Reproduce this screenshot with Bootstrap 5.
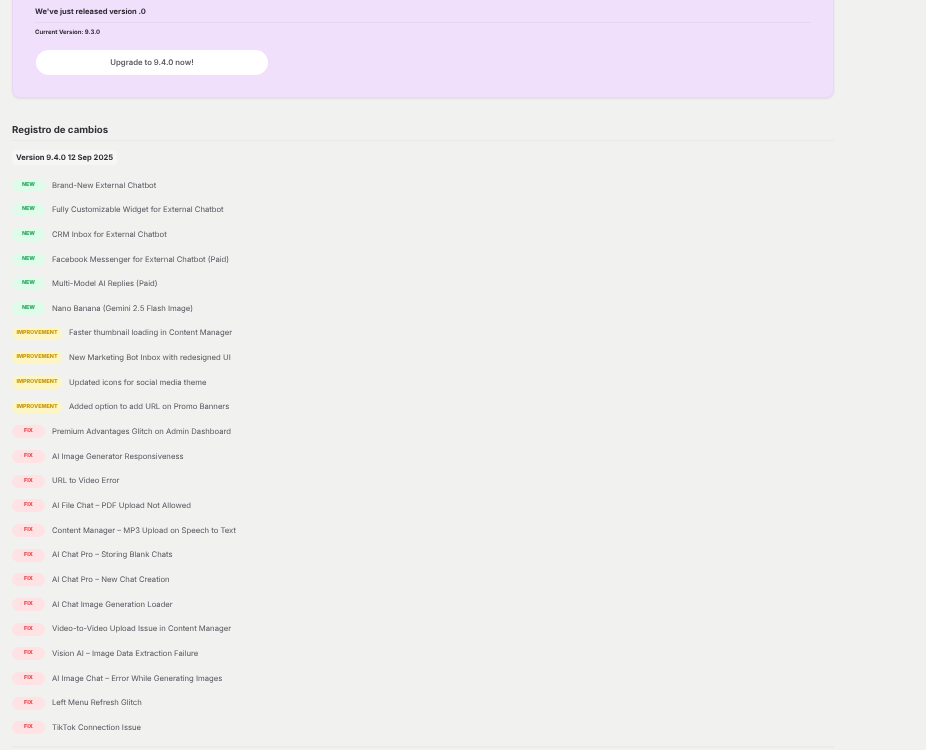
<!DOCTYPE html>
<html lang="en">
<head>
<meta charset="utf-8">
<title>Registro de cambios</title>
<link href="https://cdn.jsdelivr.net/npm/bootstrap@5.3.0/dist/css/bootstrap.min.css" rel="stylesheet">
<style>
html,body{height:750px;overflow:hidden}
body{background:#f1f1ef;font-family:Inter,"Liberation Sans",sans-serif;color:#454550;margin:0;text-rendering:geometricPrecision}
.sheet{width:822px;margin-left:12px;filter:blur(.5px)}
.promo{background:#f1e0fb;border:1px solid #e9d8f3;border-radius:8px;margin-top:-20px;height:118px;padding:24px 22px 0 22px;box-shadow:0 1px 2px rgba(120,80,150,.12)}
.promo-title{font-size:7.55px;font-weight:700;color:#2f2d36;line-height:14px}
.promo-rule{border-top:1px solid #e8d6f2;margin:3px 0 0 0;opacity:1}
.promo-cur{font-size:6px;font-weight:700;color:#2f2d36;line-height:10px;margin-top:5px}
.promo-btn{display:block;width:232px;height:25px;border-radius:13px;background:#fff;border:0;margin:12px 0 0 1px;padding:0;color:#5b5a66;font-size:7.75px;font-weight:600;line-height:25px;text-align:center}
.log-title{font-size:9.7px;font-weight:700;color:#2f2f36;line-height:14px;margin:26px 0 0}
.log-rule{border-top:1px solid #e9e9e7;margin:2px 0 0;opacity:1}
.ver{display:inline-block;background:#f6f6f5;border-radius:4px;font-size:7.6px;font-weight:700;color:#2f2f36;line-height:15px;padding:0 4px;margin-top:9px}
.rows{margin-top:7px;height:573px}
.entry{height:24.66px;gap:7px;font-size:7.7px;font-weight:400;color:#55555f}
.tag{width:33px;height:13px;border-radius:7px;font-size:5.4px;font-weight:800;line-height:13px;text-align:center;flex:none}
.tag-new{background:#dffbe9;color:#2ea863}
.tag-imp{width:50px;background:#fdf6c3;color:#c8980f}
.tag-fix{background:#ffe2e4;color:#e5484d}
.end-rule{border-top:2px solid #ebebe9;margin:0;opacity:1}
</style>
</head>
<body>
<div class="sheet">
  <section class="promo">
    <div class="promo-title">We've just released version .0</div>
    <hr class="promo-rule">
    <div class="promo-cur">Current Version: 9.3.0</div>
    <a class="promo-btn text-decoration-none" href="#">Upgrade to 9.4.0 now!</a>
  </section>
  <h2 class="log-title">Registro de cambios</h2>
  <hr class="log-rule">
  <div class="ver">Version 9.4.0 12 Sep 2025</div>
  <div class="rows">
    <div class="entry d-flex align-items-center"><span class="tag tag-new">NEW</span><span>Brand-New External Chatbot</span></div>
    <div class="entry d-flex align-items-center"><span class="tag tag-new">NEW</span><span>Fully Customizable Widget for External Chatbot</span></div>
    <div class="entry d-flex align-items-center"><span class="tag tag-new">NEW</span><span>CRM Inbox for External Chatbot</span></div>
    <div class="entry d-flex align-items-center"><span class="tag tag-new">NEW</span><span>Facebook Messenger for External Chatbot (Paid)</span></div>
    <div class="entry d-flex align-items-center"><span class="tag tag-new">NEW</span><span>Multi-Model AI Replies (Paid)</span></div>
    <div class="entry d-flex align-items-center"><span class="tag tag-new">NEW</span><span>Nano Banana (Gemini 2.5 Flash Image)</span></div>
    <div class="entry d-flex align-items-center"><span class="tag tag-imp">IMPROVEMENT</span><span>Faster thumbnail loading in Content Manager</span></div>
    <div class="entry d-flex align-items-center"><span class="tag tag-imp">IMPROVEMENT</span><span>New Marketing Bot Inbox with redesigned UI</span></div>
    <div class="entry d-flex align-items-center"><span class="tag tag-imp">IMPROVEMENT</span><span>Updated icons for social media theme</span></div>
    <div class="entry d-flex align-items-center"><span class="tag tag-imp">IMPROVEMENT</span><span>Added option to add URL on Promo Banners</span></div>
    <div class="entry d-flex align-items-center"><span class="tag tag-fix">FIX</span><span>Premium Advantages Glitch on Admin Dashboard</span></div>
    <div class="entry d-flex align-items-center"><span class="tag tag-fix">FIX</span><span>AI Image Generator Responsiveness</span></div>
    <div class="entry d-flex align-items-center"><span class="tag tag-fix">FIX</span><span>URL to Video Error</span></div>
    <div class="entry d-flex align-items-center"><span class="tag tag-fix">FIX</span><span>AI File Chat – PDF Upload Not Allowed</span></div>
    <div class="entry d-flex align-items-center"><span class="tag tag-fix">FIX</span><span>Content Manager – MP3 Upload on Speech to Text</span></div>
    <div class="entry d-flex align-items-center"><span class="tag tag-fix">FIX</span><span>AI Chat Pro – Storing Blank Chats</span></div>
    <div class="entry d-flex align-items-center"><span class="tag tag-fix">FIX</span><span>AI Chat Pro – New Chat Creation</span></div>
    <div class="entry d-flex align-items-center"><span class="tag tag-fix">FIX</span><span>AI Chat Image Generation Loader</span></div>
    <div class="entry d-flex align-items-center"><span class="tag tag-fix">FIX</span><span>Video-to-Video Upload Issue in Content Manager</span></div>
    <div class="entry d-flex align-items-center"><span class="tag tag-fix">FIX</span><span>Vision AI – Image Data Extraction Failure</span></div>
    <div class="entry d-flex align-items-center"><span class="tag tag-fix">FIX</span><span>AI Image Chat – Error While Generating Images</span></div>
    <div class="entry d-flex align-items-center"><span class="tag tag-fix">FIX</span><span>Left Menu Refresh Glitch</span></div>
    <div class="entry d-flex align-items-center"><span class="tag tag-fix">FIX</span><span>TikTok Connection Issue</span></div>
  </div>
  <hr class="end-rule">
</div>
<script src="https://cdn.jsdelivr.net/npm/bootstrap@5.3.0/dist/js/bootstrap.bundle.min.js"></script>
</body>
</html>
